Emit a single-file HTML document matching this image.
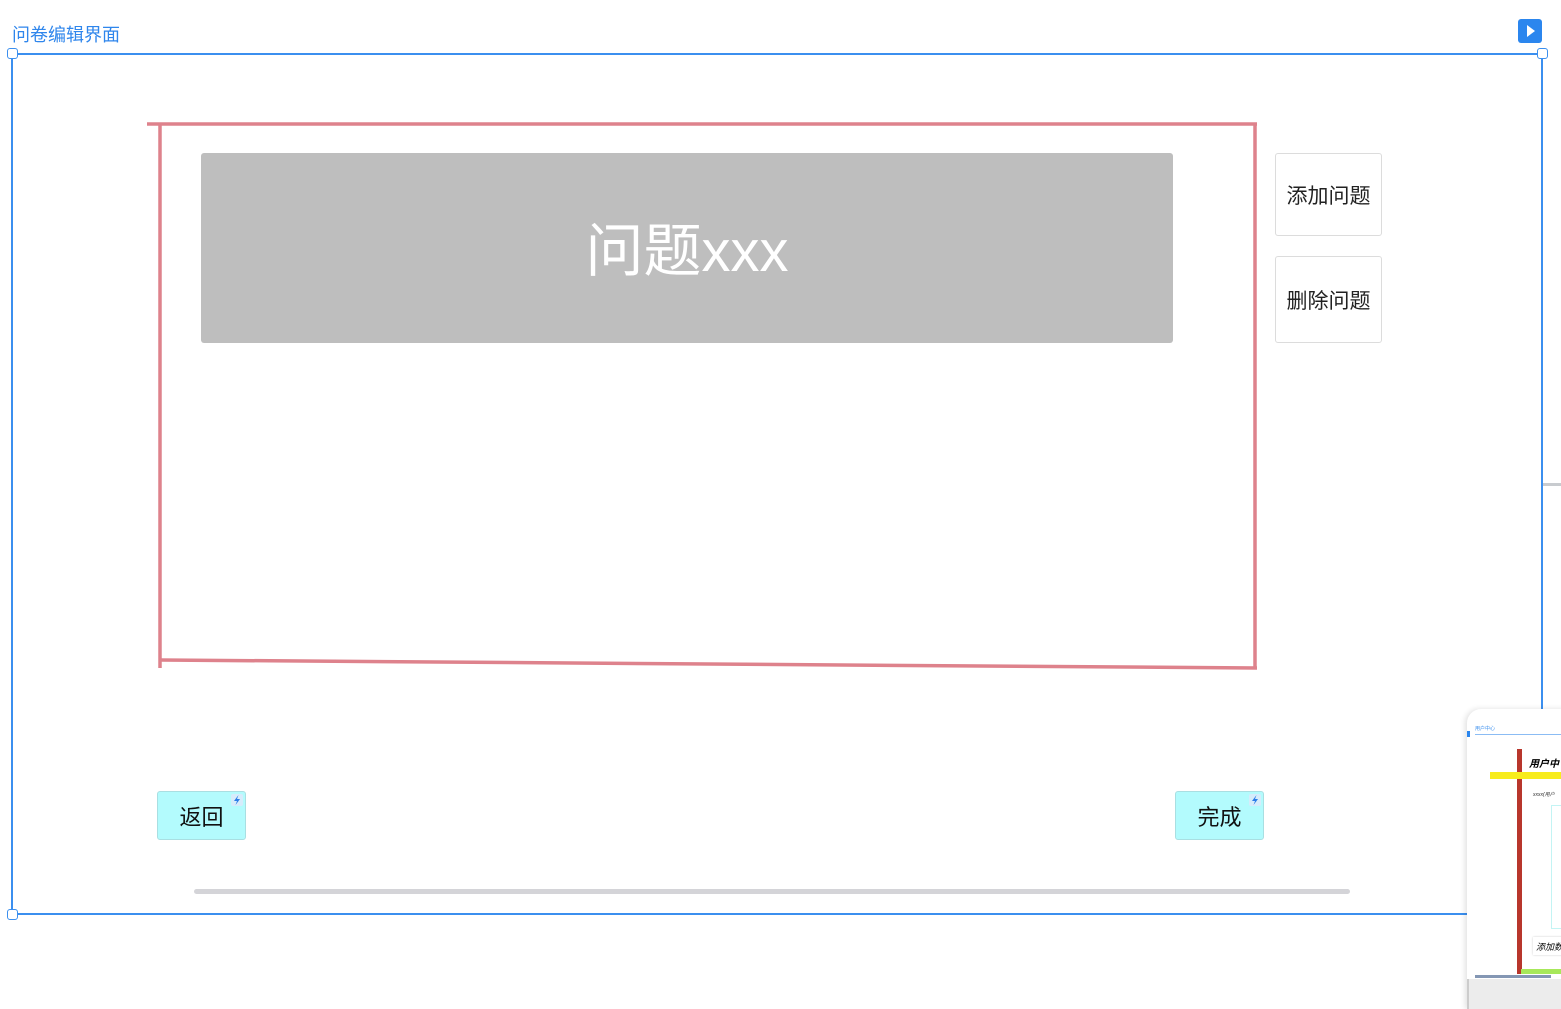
<!DOCTYPE html>
<html><head><meta charset="utf-8"><style>
*{margin:0;padding:0;box-sizing:border-box}
body{width:1561px;height:1001px;background:#fff;position:relative;overflow:hidden;font-family:"Liberation Sans","Noto Sans CJK SC",sans-serif}
.abs{position:absolute}
.h{position:absolute;width:11px;height:11px;background:#fff;border:1.5px solid #3b8fef;border-radius:3px}
.btn{position:absolute;background:#fff;border:1px solid #dcdcdc;border-radius:3px;font-size:21px;color:#222;display:flex;align-items:center;justify-content:center}
.cy{position:absolute;background:#b3fbfd;border:1px solid #a9dfe2;border-radius:3px;font-size:22px;color:#111;display:flex;align-items:center;justify-content:center}
.bolt{position:absolute;right:2px;top:2px;width:12px;height:12px;background:#d6ecfb;border-radius:2px;overflow:hidden}
.bolt svg{display:block;position:absolute;left:0;top:0}
</style></head><body>
<div class="abs" style="left:12px;top:21px;font-size:18px;color:#2f86ec">问卷编辑界面</div>
<div class="abs" style="left:1518px;top:19px;width:24px;height:24px;background:#2b86ee;border-radius:3px">
<svg width="24" height="24"><path d="M9 6 L17 12 L9 18 Z" fill="#fff"/></svg></div>
<div class="abs" style="left:11px;top:53px;width:1532px;height:862px;border:2px solid #3b8fef"></div>
<div class="h" style="left:7px;top:48px"></div>
<div class="h" style="left:1537px;top:48px"></div>
<div class="h" style="left:7px;top:909px"></div>
<div class="abs" style="left:1543px;top:483px;width:18px;height:3px;background:#c8cbcf"></div>
<svg class="abs" style="left:0;top:0" width="1561" height="1001">
<g stroke="#de828c" stroke-width="3.5" fill="none">
<line x1="147" y1="124" x2="1257" y2="124"/>
<line x1="160" y1="124" x2="160" y2="668"/>
<line x1="1255" y1="124" x2="1255" y2="669"/>
<line x1="160" y1="660" x2="1257" y2="668"/>
</g></svg>
<div class="abs" style="left:201px;top:153px;width:972px;height:190px;background:#bebebe;border-radius:3px;color:#fff;font-size:58px;display:flex;align-items:center;justify-content:center;padding-bottom:4px">问题xxx</div>
<div class="btn" style="left:1275px;top:153px;width:107px;height:83px">添加问题</div>
<div class="btn" style="left:1275px;top:256px;width:107px;height:87px">删除问题</div>
<div class="cy" style="left:157px;top:791px;width:89px;height:49px">返回<div class="bolt"><svg width="12" height="12" viewBox="0 0 12 12"><path d="M7.5 1 L3 7 L6 7 L4.5 11 L9 5 L6 5 Z" fill="#2b7de9"/></svg></div></div>
<div class="cy" style="left:1175px;top:791px;width:89px;height:49px">完成<div class="bolt"><svg width="12" height="12" viewBox="0 0 12 12"><path d="M7.5 1 L3 7 L6 7 L4.5 11 L9 5 L6 5 Z" fill="#2b7de9"/></svg></div></div>
<div class="abs" style="left:194px;top:889px;width:1156px;height:5px;background:#d4d4d8;border-radius:3px"></div>
<div class="abs" style="left:1467px;top:709px;width:100px;height:300px;background:#fff;border-radius:14px 0 0 0;box-shadow:-2px 0 6px rgba(0,0,0,.12);overflow:hidden">
<div class="abs" style="left:8px;top:16px;font-size:5px;color:#3b8fef">用户中心</div>
<div class="abs" style="left:8px;top:25px;width:100px;height:1px;background:#8bbcf4"></div>
<div class="abs" style="left:0;top:22px;width:3px;height:6px;background:#2b86ee"></div>
<div class="abs" style="left:50px;top:40px;width:5px;height:225px;background:#b8362c"></div>
<div class="abs" style="left:23px;top:63px;width:80px;height:7px;background:#f7ec1c"></div>
<div class="abs" style="left:62px;top:46px;font-size:10px;font-weight:bold;font-style:italic">用户中</div>
<div class="abs" style="left:66px;top:82px;font-size:5px;font-style:italic;color:#333">xxxx(用户</div>
<div class="abs" style="left:84px;top:96px;width:20px;height:124px;border:1px solid #c3f4f4"></div>
<div class="abs" style="left:66px;top:228px;width:40px;height:18px;background:#fff;box-shadow:0 0 2px #ccc;font-size:9px;font-style:italic;padding:3px">添加数</div>
<div class="abs" style="left:54px;top:260px;width:50px;height:5px;background:#a7e85a"></div>
<div class="abs" style="left:8px;top:266px;width:76px;height:3px;background:#8497b4"></div>
<div class="abs" style="left:0;top:270px;width:100px;height:30px;background:#ececec;border-left:2px solid #ccc"></div>
</div>
</body></html>
